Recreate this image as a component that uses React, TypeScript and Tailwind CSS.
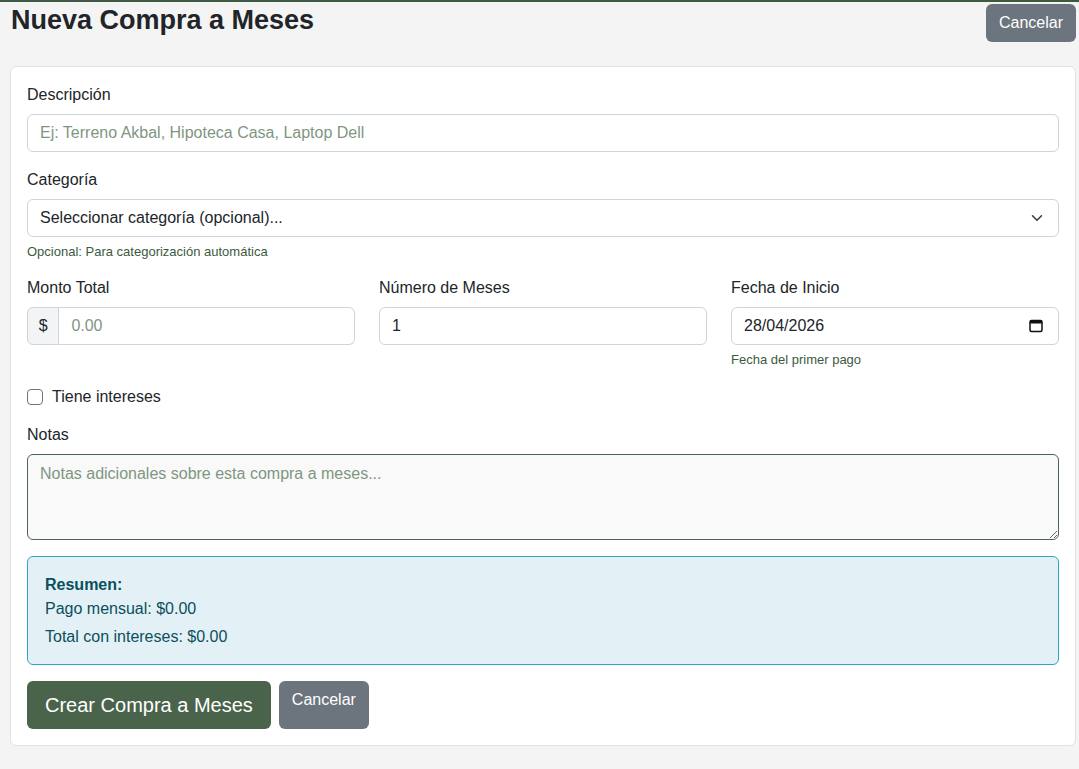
export default function App() {
  const input = "block h-[38px] w-full rounded-[6px] border border-[#ced4da] bg-white px-3 text-[16px] text-[#212529] placeholder:text-[#7f9682] outline-none";
  const label = "mb-[8px] block text-[16px] leading-[22px] text-[#212529]";
  return (
    <div className="min-h-[769px] w-[1079px] border-t-2 border-[#3f5a42] bg-[#f4f4f4] pl-[10px] pr-[3px] pb-[10px]" style={{ fontFamily: '"Liberation Sans", Arial, sans-serif' }}>
      <div className="flex items-start justify-between pt-[1px]">
        <h1 className="pl-px text-[27px] font-semibold leading-[34px] text-[#212529]">Nueva Compra a Meses</h1>
        <button className="mt-[1px] h-[38px] rounded-[6px] bg-[#6c757d] px-[13px] text-[16px] text-white">Cancelar</button>
      </div>
      <div className="mt-[24px] rounded-[6px] border border-[#dee2e6] bg-white px-[16px] pb-[16px] pt-[17px]">
        <label className={label}>Descripción</label>
        <input className={input} placeholder="Ej: Terreno Akbal, Hipoteca Casa, Laptop Dell" />
        <label className={label + " mt-[17px]"}>Categoría</label>
        <div className="relative">
          <select className={input + " appearance-none"}>
            <option>Seleccionar categoría (opcional)...</option>
          </select>
          <svg className="pointer-events-none absolute right-[16px] top-[13px]" width="12" height="12" viewBox="0 0 16 16"><path d="M2 5l6 6 6-6" fill="none" stroke="#343a40" strokeWidth="2" strokeLinecap="round" strokeLinejoin="round" /></svg>
        </div>
        <div className="mt-[6px] text-[13px] leading-[18px] text-[#3d5a40]">Opcional: Para categorización automática</div>
        <div className="mt-[16px] grid grid-cols-3 gap-6">
          <div>
            <label className={label}>Monto Total</label>
            <div className="flex h-[38px]">
              <span className="flex w-[36px] items-center justify-center rounded-l-[6px] border border-[#ced4da] bg-[#f3f4f5] text-[16px] text-[#212529]">$</span>
              <input className="h-[38px] w-full rounded-r-[6px] border border-l-0 border-[#ced4da] px-3 text-[16px] outline-none placeholder:text-[#7f9682]" placeholder="0.00" />
            </div>
          </div>
          <div>
            <label className={label}>Número de Meses</label>
            <input className={input} defaultValue="1" />
          </div>
          <div>
            <label className={label}>Fecha de Inicio</label>
            <div className="relative">
              <input className={input} defaultValue="28/04/2026" />
              <svg className="absolute right-[16px] top-[12px]" width="14" height="14" viewBox="0 0 14 14"><rect x="1" y="1.5" width="12" height="11" rx="1.5" fill="none" stroke="#111" strokeWidth="1.5" /><rect x="1" y="1.5" width="12" height="3" fill="#111" /></svg>
            </div>
            <div className="mt-[6px] text-[13px] leading-[18px] text-[#3d5a40]">Fecha del primer pago</div>
          </div>
        </div>
        <label className="mt-[17px] flex items-center gap-[9px] text-[16px] leading-[22px] text-[#212529]">
          <span className="h-[16px] w-[16px] rounded-[4px] border border-[#6c757d] bg-white" />
          Tiene intereses
        </label>
        <label className={label + " mt-[16px]"}>Notas</label>
        <textarea className="block h-[86px] w-full resize-y rounded-[6px] border border-[#4d6651] bg-[#f8f9f8] px-3 py-[7px] text-[16px] outline-none placeholder:text-[#7f9682]" placeholder="Notas adicionales sobre esta compra a meses..." />
        <div className="mt-[16px] rounded-[6px] border border-[#30a5bf] bg-[#e3f1f6] px-[17px] pb-[16px] pt-[18px] text-[16px] text-[#0b4f5c]">
          <div className="font-bold leading-[20px]">Resumen:</div>
          <div className="mt-[3px] leading-[22px]">Pago mensual: $0.00</div>
          <div className="mt-[6px] leading-[22px]">Total con intereses: $0.00</div>
        </div>
        <div className="mt-[16px] flex gap-2">
          <button className="h-[48px] rounded-[6px] bg-[#4a634b] px-[18px] text-[20px] text-white">Crear Compra a Meses</button>
          <button className="h-[48px] rounded-[6px] bg-[#6c757d] px-[13px] pb-[10px] text-[16px] text-white">Cancelar</button>
        </div>
      </div>
    </div>
  );
}
